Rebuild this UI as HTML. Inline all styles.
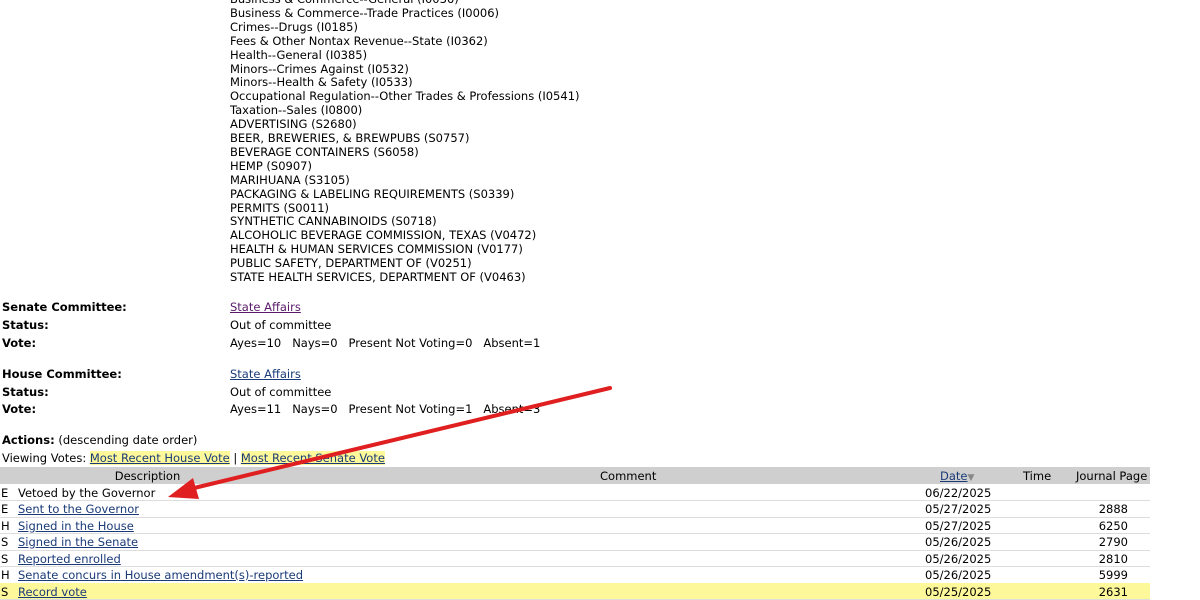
<!DOCTYPE html>
<html><head><style>
body{margin:0;width:1200px;height:600px;overflow:hidden;background:#fff;font-family:"DejaVu Sans","Liberation Sans",sans-serif;font-size:11.5px;color:#000;position:relative}
.l{position:absolute;line-height:14px;white-space:nowrap}
a{color:#1a3a78;text-decoration:underline}
.b{font-weight:bold}
.hl{background:#fdf89a}
.row{position:absolute;left:0;width:1150px;height:16px;border-bottom:1px solid #ddd}
</style></head><body>
<div id="subj"></div>
<script>
var s=["Business & Commerce--General (I0036)","Business & Commerce--Trade Practices (I0006)","Crimes--Drugs (I0185)","Fees & Other Nontax Revenue--State (I0362)","Health--General (I0385)","Minors--Crimes Against (I0532)","Minors--Health & Safety (I0533)","Occupational Regulation--Other Trades & Professions (I0541)","Taxation--Sales (I0800)","ADVERTISING (S2680)","BEER, BREWERIES, & BREWPUBS (S0757)","BEVERAGE CONTAINERS (S6058)","HEMP (S0907)","MARIHUANA (S3105)","PACKAGING & LABELING REQUIREMENTS (S0339)","PERMITS (S0011)","SYNTHETIC CANNABINOIDS (S0718)","ALCOHOLIC BEVERAGE COMMISSION, TEXAS (V0472)","HEALTH & HUMAN SERVICES COMMISSION (V0177)","PUBLIC SAFETY, DEPARTMENT OF (V0251)","STATE HEALTH SERVICES, DEPARTMENT OF (V0463)"];
var h="";s.forEach(function(t,i){h+='<div class="l" style="left:230px;top:'+(-8+i*13.9)+'px">'+t.replace(/&/g,"&amp;")+'</div>';});
document.getElementById("subj").innerHTML=h;
</script>
<div class="l b" style="left:2px;top:300px">Senate Committee:</div><div class="l" style="left:230px;top:300px"><a style="color:#5a1a6a">State Affairs</a></div>
<div class="l b" style="left:2px;top:318px">Status:</div><div class="l" style="left:230px;top:318px">Out of committee</div>
<div class="l b" style="left:2px;top:336px">Vote:</div><div class="l" style="left:230px;top:336px">Ayes=10&nbsp;&nbsp; Nays=0&nbsp;&nbsp; Present Not Voting=0&nbsp;&nbsp; Absent=1</div>
<div class="l b" style="left:2px;top:367px">House Committee:</div><div class="l" style="left:230px;top:367px"><a>State Affairs</a></div>
<div class="l b" style="left:2px;top:385px">Status:</div><div class="l" style="left:230px;top:385px">Out of committee</div>
<div class="l b" style="left:2px;top:402px">Vote:</div><div class="l" style="left:230px;top:402px">Ayes=11&nbsp;&nbsp; Nays=0&nbsp;&nbsp; Present Not Voting=1&nbsp;&nbsp; Absent=3</div>
<div class="l" style="left:2px;top:433px"><span class="b">Actions:</span> (descending date order)</div>
<div class="l" style="left:2px;top:451px">Viewing Votes: <a class="hl">Most Recent House Vote</a> | <a class="hl">Most Recent Senate Vote</a></div>
<div style="position:absolute;left:0;top:467px;width:1150px;height:17px;background:#cfcfcf"></div>
<div class="l" style="left:100px;top:469px;width:95px;text-align:center">Description</div>
<div class="l" style="left:600px;top:469px">Comment</div>
<div class="l" style="left:940px;top:469px"><a>Date</a><span style="color:#888;font-size:9px">&#9660;</span></div>
<div class="l" style="left:1023px;top:469px">Time</div>
<div class="l" style="left:1076px;top:469px">Journal Page</div>
<div id="rows"></div>
<script>
var r=[["E","Vetoed by the Governor","06/22/2025","",0],["E","Sent to the Governor","05/27/2025","2888",1],["H","Signed in the House","05/27/2025","6250",1],["S","Signed in the Senate","05/26/2025","2790",1],["S","Reported enrolled","05/26/2025","2810",1],["H","Senate concurs in House amendment(s)-reported","05/26/2025","5999",1],["S","Record vote","05/25/2025","2631",1]];
var h="";r.forEach(function(x,i){var t=484+i*16.5;h+='<div class="row'+(i==6?' hl':'')+'" style="top:'+t+'px"></div>'+
'<div class="l" style="left:1px;top:'+(t+1.5)+'px">'+x[0]+'</div>'+
'<div class="l" style="left:18px;top:'+(t+1.5)+'px">'+(x[4]?'<a>'+x[1]+'</a>':x[1])+'</div>'+
'<div class="l" style="left:925px;top:'+(t+1.5)+'px">'+x[2]+'</div>'+
'<div class="l" style="left:1080px;top:'+(t+1.5)+'px;width:48px;text-align:right">'+x[3]+'</div>';});
document.getElementById("rows").innerHTML=h;
</script>
<svg style="position:absolute;left:0;top:0" width="1200" height="600">
<line x1="610" y1="388" x2="190" y2="489" stroke="#e02020" stroke-width="4" stroke-linecap="round"/>
<polygon points="168,497 193,478 199,499" fill="#e02020"/>
</svg>
</body></html>
